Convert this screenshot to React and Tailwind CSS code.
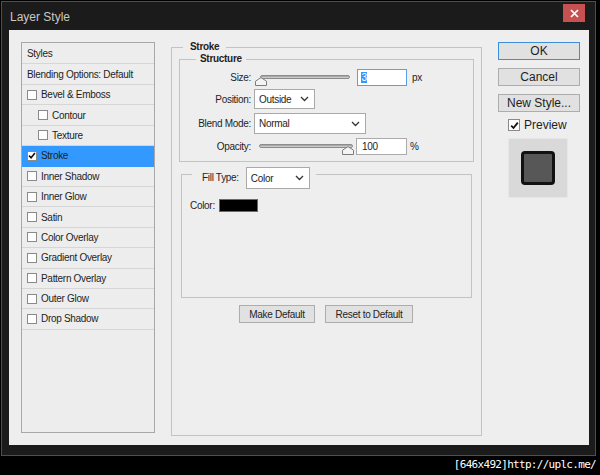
const sans = "font-['Liberation_Sans',Arial,sans-serif]";

function Check() {
  return (
    <svg width="9" height="9" viewBox="0 0 9 9">
      <path d="M1.2 4.6 L3.5 7 L7.8 1.6" fill="none" stroke="#111" strokeWidth="1.8" />
    </svg>
  );
}

function Box({ checked, big }) {
  return (
    <span
      className={
        (big ? 'w-[12px] h-[12px] ' : 'w-[10px] h-[10px] ') +
        'shrink-0 border border-[#8a8a8a] bg-white flex items-center justify-center'
      }
    >
      {checked && <Check />}
    </span>
  );
}

function Chevron() {
  return (
    <svg width="9" height="6" viewBox="0 0 9 6">
      <path d="M1 1 L4.5 4.5 L8 1" fill="none" stroke="#333" strokeWidth="1.3" />
    </svg>
  );
}

function Select({ value, w, h }) {
  return (
    <div className={w + ' ' + h + ' bg-white border border-[#a9a9a9] flex items-center justify-between pl-[4px] pr-[5px]'}>
      <span>{value}</span>
      <Chevron />
    </div>
  );
}

function Thumb() {
  return (
    <svg width="12" height="9" viewBox="0 0 12 9">
      <path d="M0.5 8.5 V4.2 L6 0.6 L11.5 4.2 V8.5 Z" fill="#f4f4f4" stroke="#7d7d7d" strokeWidth="1" />
    </svg>
  );
}

// track and thumb offsets are per-slider, so they go inline
function Slider({ w, trackLeft, trackW, thumbLeft }) {
  return (
    <div className={w + ' h-[17px] relative'}>
      <div
        className="absolute top-[6px] h-[4px] rounded-full border border-[#8c8c8c] bg-linear-to-b from-[#9a9a9a] to-[#dadada]"
        style={{ left: trackLeft, width: trackW }}
      />
      <div className="absolute top-[8px]" style={{ left: thumbLeft }}>
        <Thumb />
      </div>
    </div>
  );
}

const styleRows = [
  { label: 'Bevel & Emboss' },
  { label: 'Contour', indent: true },
  { label: 'Texture', indent: true },
  { label: 'Stroke', checked: true, selected: true },
  { label: 'Inner Shadow' },
  { label: 'Inner Glow' },
  { label: 'Satin' },
  { label: 'Color Overlay' },
  { label: 'Gradient Overlay' },
  { label: 'Pattern Overlay' },
  { label: 'Outer Glow' },
  { label: 'Drop Shadow' },
];

function StylesList() {
  return (
    <div className="w-[134px] h-[391px] shrink-0 border border-[#a8a8a8] bg-[#ededed] flex flex-col">
      <div className="h-[21px] border-b border-[#d6d6d6] pl-[5px] flex items-center">Styles</div>
      <div className="h-[21px] border-b border-[#d6d6d6] pl-[5px] flex items-center">Blending Options: Default</div>
      {styleRows.map((r) => (
        <div
          key={r.label}
          className={
            'h-[20.4px] border-b flex items-center gap-[4px] ' +
            (r.indent ? 'pl-[16px] ' : 'pl-[5px] ') +
            (r.selected ? 'bg-[#3399ff] border-[#3399ff]' : 'border-[#d6d6d6]')
          }
        >
          <Box checked={r.checked} />
          <span>{r.label}</span>
        </div>
      ))}
    </div>
  );
}

function Button({ children, w, blue, small }) {
  return (
    <div
      className={
        w +
        ' flex items-center justify-center bg-[#e1e1e1] border ' +
        (blue ? 'border-[#3c8fd6] ' : 'border-[#adadad] ') +
        (small ? 'h-[18px]' : 'h-[18px] text-[12px] tracking-normal')
      }
    >
      {children}
    </div>
  );
}

function StrokePanel() {
  return (
    <fieldset className="w-[311px] h-[395px] -mt-[1px] shrink-0 border border-[#c3c3c3] px-[7px]">
      <legend className="ml-[4px] px-[7px] leading-[12px] font-bold">Stroke</legend>

      <fieldset className="h-[109px] border border-[#c3c3c3]">
        <legend className="ml-[16px] px-[4px] leading-[12px] font-bold">Structure</legend>
        <div className="flex flex-col mt-[4px]">
          <div className="flex items-center h-[17px]">
            <span className="w-[71px] text-right">Size:</span>
            <Slider w="w-[103px] ml-[3px]" trackLeft={6} trackW={90} thumbLeft={1} />
            <div className="w-[50px] h-[17px] bg-white border border-[#5aa0e6] flex items-center pl-[3px]">
              <span className="bg-[#3399ff] text-white leading-[11px] px-[0.5px]">3</span>
            </div>
            <span className="ml-[5px]">px</span>
          </div>
          <div className="flex items-center mt-[3px]">
            <span className="w-[71px] text-right mr-[3px]">Position:</span>
            <Select value="Outside" w="w-[61px]" h="h-[20px]" />
          </div>
          <div className="flex items-center mt-[4px]">
            <span className="w-[71px] text-right mr-[3px]">Blend Mode:</span>
            <Select value="Normal" w="w-[112px]" h="h-[21px]" />
          </div>
          <div className="flex items-center h-[17px] mt-[4px]">
            <span className="w-[71px] text-right">Opacity:</span>
            <Slider w="w-[102px] ml-[3px]" trackLeft={5} trackW={94} thumbLeft={88} />
            <div className="w-[51px] h-[17px] bg-white border border-[#ababab] flex items-center pl-[5px]">100</div>
            <span className="ml-[3px]">%</span>
          </div>
        </div>
      </fieldset>

      <fieldset className="h-[131px] mt-[5px] mx-[2px] border border-[#c3c3c3]">
        <legend className="ml-[10px] pl-[10px] pr-[6px] h-[14px]">
          <div className="flex items-start">
            <span className="mt-[5px] leading-[12px] mr-[7px]">Fill Type:</span>
            <Select value="Color" w="w-[64px]" h="h-[22px]" />
          </div>
        </legend>
        <div className="flex items-center mt-[17px] pl-[8px]">
          <span className="mr-[4px]">Color:</span>
          <span className="w-[39px] h-[13px] bg-black border border-[#6a6a6a]" />
        </div>
      </fieldset>

      <div className="flex gap-[10px] mt-[7px] ml-[60px]">
        <Button w="w-[76px]" small>Make Default</Button>
        <Button w="w-[88px]" small>Reset to Default</Button>
      </div>
    </fieldset>
  );
}

function RightColumn() {
  return (
    <div className="w-[82px] ml-[16px] flex flex-col">
      <Button w="w-[82px]" blue>OK</Button>
      <div className="mt-[8px]">
        <Button w="w-[82px]">Cancel</Button>
      </div>
      <div className="mt-[8px]">
        <Button w="w-[82px]">New Style...</Button>
      </div>
      <div className="flex items-center h-[14px] leading-[14px] mt-[6px] ml-[10px] gap-[4px] text-[12px] tracking-normal">
        <Box checked big />
        <span>Preview</span>
      </div>
      <div className="w-[60px] h-[60px] mt-[6px] ml-[10px] bg-[#d9d9d9] border border-[#e6e6e6] flex items-center justify-center">
        <div className="w-[34px] h-[34px] rounded-[4px] bg-[#575757] border-[3px] border-[#111]" />
      </div>
    </div>
  );
}

export default function App() {
  return (
    <div className={'w-[600px] h-[475px] bg-black pt-[1px] pl-[1px] overflow-hidden ' + sans}>
      <div className="w-[595px] h-[455px] bg-[#1b1b1b] border border-[#4e4e4e] flex flex-col">
        <div className="h-[28px] shrink-0 flex items-start justify-between">
          <span className="ml-[8px] mt-[8px] text-[12px] leading-[14px] text-[#c8c8c8]">Layer Style</span>
          <div className="w-[22px] h-[18px] mt-[2px] mr-[10px] bg-[#c75050] flex items-center justify-center">
            <svg width="9" height="9" viewBox="0 0 9 9">
              <path d="M1 1 L8 8 M8 1 L1 8" stroke="#fff" strokeWidth="1.7" />
            </svg>
          </div>
        </div>
        <div className="w-[580px] h-[415px] ml-[7px] bg-[#eeeeee] flex pl-[12px] pt-[12px] text-[10px] tracking-[-0.3px] text-[#1e1e1e]">
          <StylesList />
          <div className="ml-[16px]">
            <StrokePanel />
          </div>
          <RightColumn />
        </div>
      </div>
      <div className="text-right pr-[4px] mt-[2px] text-white text-[11px] tracking-[-0.7px] leading-[14px] font-['DejaVu_Sans_Mono',monospace]">
        [646x492]http://uplc.me/
      </div>
    </div>
  );
}
